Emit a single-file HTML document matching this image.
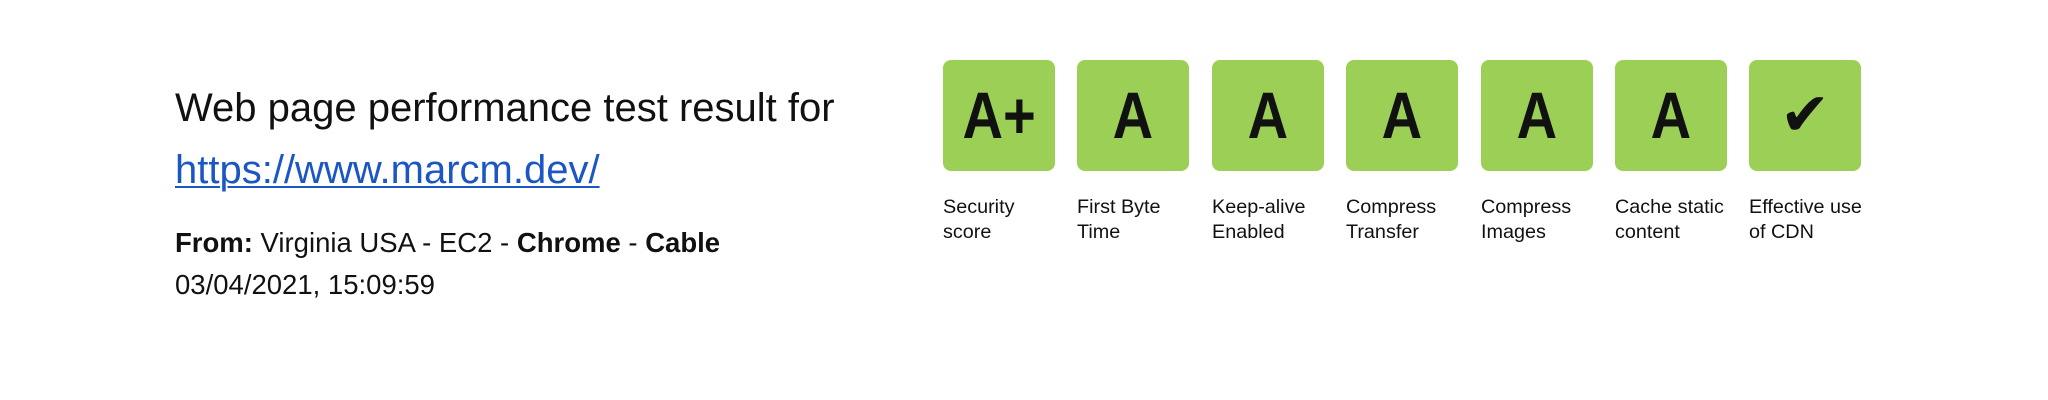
<!DOCTYPE html>
<html><head><style>
body{margin:0;width:2048px;height:400px;background:#fff;font-family:"Liberation Sans",Arial,sans-serif;color:#111;position:relative;overflow:hidden}
.t{position:absolute;left:175px;top:86px;font-size:40px;white-space:nowrap}
.l{position:absolute;left:175px;top:148px;font-size:40px;color:#1a56c4;text-decoration:underline;text-decoration-thickness:2px;text-underline-offset:3px}
.f{position:absolute;left:175px;top:227px;font-size:27.5px;white-space:nowrap}
.d{position:absolute;left:175px;top:269px;font-size:27.5px}
.g{position:absolute;top:60px;width:112px;text-align:center}
.b{width:112px;height:111px;background:#9ccf55;border-radius:8px;font-weight:bold;font-size:66px;line-height:111px;color:#111}
.b span{display:inline-block;transform:scaleX(0.85)}
.c{font-size:19.8px;text-align:left;margin-top:24px;line-height:25px;white-space:nowrap}
</style></head><body>
<div class="t">Web page performance test result for</div>
<div class="l">https://www.marcm.dev/</div>
<div class="f"><b>From:</b> Virginia USA - EC2 - <b>Chrome</b> - <b>Cable</b></div>
<div class="d">03/04/2021, 15:09:59</div>
<div class="g" style="left:943px"><div class="b"><span>A+</span></div><div class="c">Security<br>score</div></div>
<div class="g" style="left:1077px"><div class="b"><span>A</span></div><div class="c">First Byte<br>Time</div></div>
<div class="g" style="left:1212px"><div class="b"><span>A</span></div><div class="c">Keep-alive<br>Enabled</div></div>
<div class="g" style="left:1346px"><div class="b"><span>A</span></div><div class="c">Compress<br>Transfer</div></div>
<div class="g" style="left:1481px"><div class="b"><span>A</span></div><div class="c">Compress<br>Images</div></div>
<div class="g" style="left:1615px"><div class="b"><span>A</span></div><div class="c">Cache static<br>content</div></div>
<div class="g" style="left:1749px"><div class="b" style="font-family:'DejaVu Sans',sans-serif;font-size:60px">✔</div><div class="c">Effective use<br>of CDN</div></div>
</body></html>
